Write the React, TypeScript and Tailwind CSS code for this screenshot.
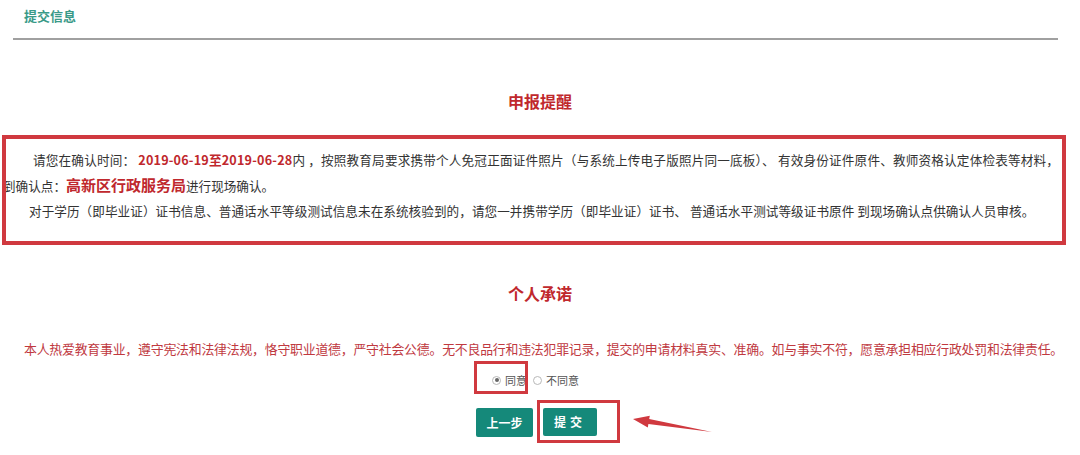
import React from 'react';

const red = 'text-[#c0282d]';

const Radio = ({ checked, label }: { checked?: boolean; label: string }) => (
  <label className="flex items-center gap-[4px]">
    <span className="flex h-[9px] w-[9px] items-center justify-center rounded-full border border-[#b8b8b8] bg-white">
      {checked && <span className="h-[4px] w-[4px] rounded-full bg-[#666]"></span>}
    </span>
    <span>{label}</span>
  </label>
);

const App = () => {
  return (
    <div
      className="relative h-[455px] w-[1080px] overflow-hidden bg-white text-[#333]"
      style={{ fontFamily: '"Noto Sans CJK SC", "Noto Sans", sans-serif' }}
    >
      {/* header */}
      <div className="h-[38px] pl-[24px] pt-[7px] text-[13px] font-bold leading-[18px] text-[#3a9a88]">提交信息</div>
      <div className="mx-[13px] h-[2px] w-[1045px] bg-[#a0a0a0]"></div>

      <h2 className={`mt-[50px] text-center text-[16px] font-bold leading-[22px] ${red}`}>申报提醒</h2>

      {/* notice */}
      <div className="relative mt-[23px] w-[1066px] pb-[23px] pl-[3px] pt-[12px] text-[12.6px] leading-[25px]">
        <p className="whitespace-nowrap indent-[30px]">
          <span className="tracking-[0.19px]">
            请您在确认时间： <span className={`font-bold ${red}`}>2019-06-19至2019-06-28</span>内 ，按照教育局要求携带个人免冠正面证件照片（与系统上传电子版照片同一底板）、 有效身份证件原件、教师资格认定体检表等材料，
          </span>
          <br />
          到确认点：<span className={`text-[15px] font-bold ${red}`}>高新区行政服务局</span>进行现场确认。
        </p>
        <p className="whitespace-nowrap indent-[26px] tracking-[0.06px]">
          对于学历（即毕业证）证书信息、普通话水平等级测试信息未在系统核验到的，请您一并携带学历（即毕业证）证书、 普通话水平测试等级证书原件 到现场确认点供确认人员审核。
        </p>
        <div className="absolute left-[2px] top-0 h-[110px] w-[1064px] border-[4px] border-[#d0393f]"></div>
      </div>

      <h2 className={`mt-[36px] text-center text-[16px] font-bold leading-[22px] ${red}`}>个人承诺</h2>

      <p className="ml-[24px] mt-[35px] whitespace-nowrap text-[12.9px] leading-[20px] tracking-[-0.22px] text-[#c0393f]">
        本人热爱教育事业，遵守宪法和法律法规，恪守职业道德，严守社会公德。无不良品行和违法犯罪记录，提交的申请材料真实、准确。如与事实不符，愿意承担相应行政处罚和法律责任。
      </p>

      <div className="ml-[492px] mt-[11px] flex h-[20px] gap-[6px] text-[11px] text-[#555]">
        <Radio checked label="同意" />
        <Radio label="不同意" />
      </div>

      <div className="ml-[476px] mt-[18px] flex gap-[10px]">
        <button className="h-[29px] w-[57px] rounded-[2px] bg-[#15897a] text-[12px] font-bold text-white">上一步</button>
        <button className="h-[28px] w-[54px] rounded-[2px] bg-[#15897a] text-[12px] font-bold tracking-[4px] text-white">提交</button>
      </div>

      {/* annotations */}
      <div className="absolute left-[474px] top-[361px] h-[33px] w-[54px] border-[3px] border-[#d0393f]"></div>
      <div className="absolute left-[537px] top-[400px] h-[43px] w-[83px] border-[3px] border-[#d0393f]"></div>
      <svg className="absolute left-[628px] top-[405px]" width="90" height="35" viewBox="0 0 90 35">
        <polygon points="5,14 21.8,10.7 21.2,14.1 84,27 20.4,19.1 19.8,22.5" fill="#d0393f" />
      </svg>
    </div>
  );
};

export default App;
